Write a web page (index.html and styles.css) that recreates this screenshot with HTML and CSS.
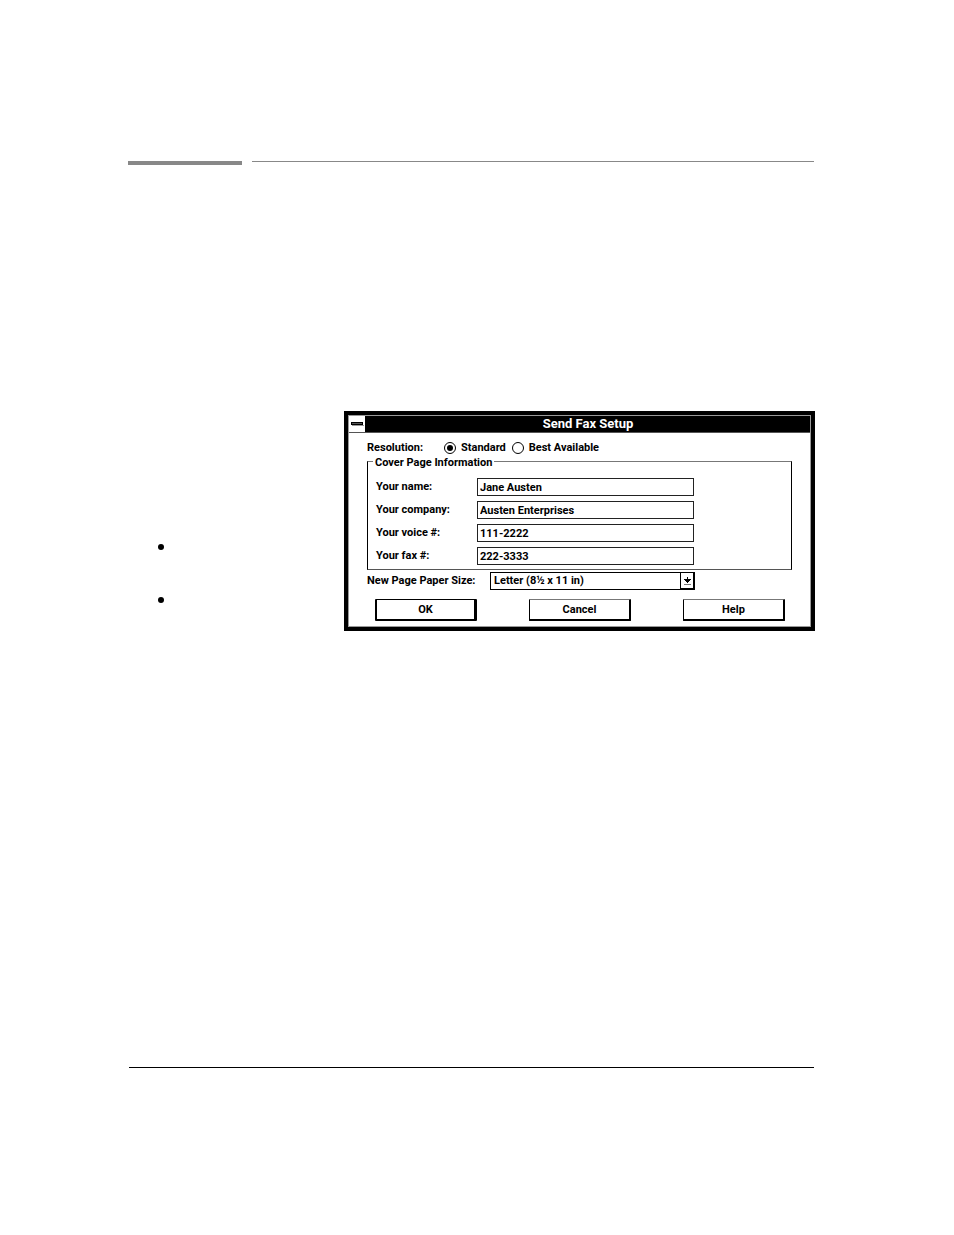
FILE: index.html
```html
<!DOCTYPE html>
<html lang="en">
<head>
    <meta charset="UTF-8">
    <meta name="viewport" content="width=device-width, initial-scale=1.0">
    <title>Send Fax Setup</title>
    <link rel="stylesheet" href="styles.css">
</head>
<body>
    <header class="page-header">
        <div class="rule-thick"></div>
        <div class="rule-thin"></div>
    </header>

    <main class="content">
        <ul class="notes">
            <li></li>
            <li></li>
        </ul>

        <section class="dialog" aria-labelledby="dialog-title">
            <div class="title-bar">
                <button type="button" class="system-menu" aria-label="System menu">
                    <svg width="13" height="4" viewBox="0 0 13 4" shape-rendering="crispEdges">
                        <path d="M0 0h12v3H0z" fill="#000"/>
                        <path d="M1 1h10v1H1z" fill="#555"/>
                        <path d="M1 3h12v1H1z" fill="#999"/>
                    </svg>
                </button>
                <h1 class="title" id="dialog-title">Send Fax Setup</h1>
            </div>

            <form class="form">
                <div class="resolution" role="radiogroup" aria-labelledby="resolution-label">
                    <span class="resolution-label" id="resolution-label">Resolution:</span>
                    <input type="radio" id="standard" name="resolution" checked>
                    <label class="radio-label" for="standard">Standard</label>
                    <input type="radio" id="best" name="resolution">
                    <label class="radio-label" for="best">Best Available</label>
                </div>

                <fieldset class="cover">
                    <legend>Cover Page Information</legend>
                    <div class="fields">
                        <label for="name">Your name:</label>
                        <input type="text" id="name" value="Jane Austen">
                        <label for="company">Your company:</label>
                        <input type="text" id="company" value="Austen Enterprises">
                        <label for="voice">Your voice #:</label>
                        <input type="text" id="voice" value="111-2222">
                        <label for="fax">Your fax #:</label>
                        <input type="text" id="fax" value="222-3333">
                    </div>
                </fieldset>

                <div class="paper">
                    <label class="paper-label" for="paper-size">New Page Paper Size:</label>
                    <div class="combo">
                        <select id="paper-size">
                            <option>Letter (8½ x 11 in)</option>
                        </select>
                        <span class="combo-arrow">
                            <svg width="7" height="8" viewBox="0 0 7 8" shape-rendering="crispEdges">
                                <path d="M3 0h1v2h3v1H6v1H5v1H4v1H3V5H2V4H1V3H0V2h3z" fill="#000"/>
                                <path d="M0 7h7v1H0z" fill="#777"/>
                            </svg>
                        </span>
                    </div>
                </div>

                <div class="buttons">
                    <button type="button" class="button default">OK</button>
                    <button type="button" class="button">Cancel</button>
                    <button type="button" class="button">Help</button>
                </div>
            </form>
        </section>
    </main>

    <footer class="page-footer"></footer>
</body>
</html>
```
FILE: styles.css
```css
* {
    box-sizing: border-box;
}

body {
    margin: 0;
    padding: 161px 139px 0 128px;
    background: #fff;
    color: #000;
    font-family: Roboto, "Liberation Sans", Arial, sans-serif;
    font-size: 11px;
    font-weight: bold;
    line-height: 12px;
}

input,
select,
button {
    margin: 0;
    font: inherit;
    color: inherit;
    border-radius: 0;
    appearance: none;
}

/* rules at the top of the page */
.page-header {
    display: flex;
    gap: 10px;
    margin-right: 1px;
}

.rule-thick {
    width: 114px;
    height: 4px;
    background: #888;
}

.rule-thin {
    flex: 1;
    height: 1px;
    background: #888;
}

.content {
    display: flex;
    align-items: flex-start;
    margin-top: 246px;
}

.notes {
    display: flex;
    flex: none;
    flex-direction: column;
    gap: 47px;
    width: 216px;
    margin: 0;
    padding: 133px 0 0 30px;
    list-style: none;
}

.notes li {
    width: 6px;
    height: 6px;
    border-radius: 50%;
    background: #000;
}

/* dialog */
.dialog {
    flex: 1;
    border: 4px solid #000;
    outline: 1px solid #999;
    outline-offset: -5px;
    padding: 1px;
}

.title-bar {
    display: flex;
    height: 17px;
    background: #000;
    border-bottom: 1px solid #555;
}

.system-menu {
    display: flex;
    align-items: center;
    justify-content: center;
    width: 17px;
    padding: 0;
    border: none;
    border-right: 1px solid #000;
    background: #fff;
}

.title {
    flex: 1;
    margin: 0;
    color: #fff;
    font-size: 13px;
    line-height: 16px;
    text-align: center;
}

.form {
    padding: 9px 18px 5px;
}

.resolution {
    display: flex;
    align-items: center;
    height: 11px;
}

.resolution-label {
    width: 77px;
}

input[type="radio"] {
    display: flex;
    align-items: center;
    justify-content: center;
    width: 12px;
    height: 12px;
    border: 1px solid #000;
    border-radius: 50%;
}

input[type="radio"]:checked::before {
    content: "";
    width: 6px;
    height: 6px;
    border-radius: 50%;
    background: #000;
}

.radio-label {
    margin: 0 6px 0 5px;
}

.cover {
    min-width: 0;
    margin: 0;
    padding: 9px 8px 4px;
    border: 1px solid #000;
    border-top-color: #777;
    border-bottom-color: #555;
}

.cover legend {
    margin-left: -3px;
    padding: 4px 2px 0;
}

.fields {
    display: grid;
    grid-template-columns: 101px minmax(0, 217px);
    row-gap: 5px;
    align-items: center;
}

input[type="text"] {
    width: 100%;
    height: 18px;
    padding: 0 2px;
    border: 1px solid #222;
    background: #fff;
}

.paper {
    display: flex;
    align-items: center;
    margin-top: 2px;
}

.paper-label {
    width: 123px;
}

.combo {
    position: relative;
    width: 205px;
    height: 18px;
}

.combo select {
    display: block;
    width: 100%;
    height: 100%;
    padding: 0 16px 0 3px;
    border: 1px solid #000;
    background: #fff;
}

.combo-arrow {
    position: absolute;
    top: 0;
    right: 0;
    bottom: 0;
    display: flex;
    align-items: center;
    justify-content: center;
    width: 15px;
    border: 1px solid #000;
    border-right-width: 2px;
    border-bottom-width: 2px;
    pointer-events: none;
}

.buttons {
    display: flex;
    justify-content: space-between;
    margin-top: 9px;
    padding: 0 7px 0 8px;
}

.button {
    width: 102px;
    height: 22px;
    padding: 0;
    border: 1px solid #000;
    border-top-color: #777;
    border-right-width: 2px;
    border-bottom-width: 2px;
    border-radius: 1px;
    background: #fff;
}

.button.default {
    border-left-width: 2px;
    border-right-width: 3px;
    border-top-color: #000;
}

.page-footer {
    margin: 436px 1px 0;
    border-top: 1px solid #000;
}
```
